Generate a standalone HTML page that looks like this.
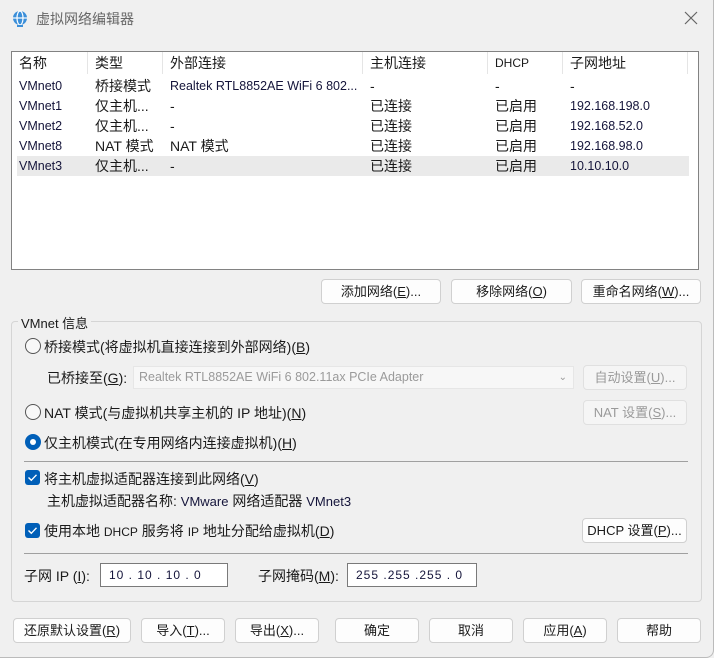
<!DOCTYPE html>
<html><head><meta charset="utf-8"><style>
*{box-sizing:border-box;margin:0;padding:0}
body{width:714px;height:658px;background:#f0f0f0;font-family:"Liberation Sans","Noto Sans CJK SC",sans-serif;font-size:13px;color:#1a1a1a;position:relative;overflow:hidden}
.a{position:absolute;white-space:nowrap}
.btn{position:absolute;height:25px;background:#fdfdfd;border:1px solid #d0d0d0;border-radius:4px;text-align:center;line-height:23px;font-size:13px}
.dis{color:#9a9a9a;background:#f5f5f5;border-color:#e0e0e0}
u{text-decoration:underline}
.lt{font-size:12.5px;color:#14143a}
.hd{position:absolute;top:0;height:22px;border-right:1px solid #e5e5e5;padding-left:7px;line-height:22px;font-size:14px}
.row{position:absolute;left:5px;width:672px;height:20px;line-height:20px;font-size:14px}
.row span{position:absolute;top:0}
.rad{position:absolute;width:16px;height:16px;border:1px solid #555;border-radius:50%;background:#f8f8f8}
.chk{position:absolute;width:15px;height:15px;background:#005fb8;border-radius:3px}
.in{position:absolute;height:24px;background:#fff;border:1px solid #7a7a7a;font-size:12px;line-height:22px;padding-left:8px;color:#14143a;letter-spacing:1px}
</style></head><body>
<div class="a" style="left:0;top:0;width:714px;height:658px;border-right:1px solid #bbb;border-bottom:1px solid #bbb;border-radius:0 0 8px 0"></div>
<svg class="a" style="left:11px;top:10px" width="18" height="18" viewBox="0 0 18 18"><circle cx="9" cy="8" r="7" fill="#3b8fd9"/><ellipse cx="9" cy="8" rx="3" ry="7" fill="none" stroke="#fff" stroke-width="1.2"/><line x1="2" y1="8" x2="16" y2="8" stroke="#fff" stroke-width="1.2"/><rect x="6" y="15" width="6" height="2" fill="#3b8fd9"/></svg>
<div class="a" style="left:36px;top:9px;font-size:14px;color:#666">虚拟网络编辑器</div>
<svg class="a" style="left:684px;top:11px" width="14" height="14"><path d="M1 1L13 13M13 1L1 13" stroke="#666" stroke-width="1.2"/></svg>

<div class="a" style="left:11px;top:51px;width:688px;height:219px;background:#fff;border:1px solid #828282">
<div class="hd" style="left:0;width:76px">名称</div>
<div class="hd" style="left:76px;width:75px">类型</div>
<div class="hd" style="left:151px;width:200px">外部连接</div>
<div class="hd" style="left:351px;width:125px">主机连接</div>
<div class="hd" style="left:476px;width:75px;font-size:12px">DHCP</div>
<div class="hd" style="left:551px;width:125px">子网地址</div>
<div class="row" style="top:24px"><span class="lt" style="left:2px">VMnet0</span><span style="left:78px">桥接模式</span><span class="lt" style="left:153px">Realtek RTL8852AE WiFi 6 802...</span><span style="left:353px">-</span><span style="left:478px">-</span><span style="left:553px">-</span></div>
<div class="row" style="top:44px"><span class="lt" style="left:2px">VMnet1</span><span style="left:78px">仅主机...</span><span style="left:153px">-</span><span style="left:353px">已连接</span><span style="left:478px">已启用</span><span class="lt" style="left:553px">192.168.198.0</span></div>
<div class="row" style="top:64px"><span class="lt" style="left:2px">VMnet2</span><span style="left:78px">仅主机...</span><span style="left:153px">-</span><span style="left:353px">已连接</span><span style="left:478px">已启用</span><span class="lt" style="left:553px">192.168.52.0</span></div>
<div class="row" style="top:84px"><span class="lt" style="left:2px">VMnet8</span><span style="left:78px">NAT 模式</span><span style="left:153px">NAT 模式</span><span style="left:353px">已连接</span><span style="left:478px">已启用</span><span class="lt" style="left:553px">192.168.98.0</span></div>
<div class="row" style="top:104px;background:#eaeaea"><span class="lt" style="left:2px">VMnet3</span><span style="left:78px">仅主机...</span><span style="left:153px">-</span><span style="left:353px">已连接</span><span style="left:478px">已启用</span><span class="lt" style="left:553px">10.10.10.0</span></div>
</div>

<div class="btn" style="left:321px;top:279px;width:120px">添加网络(<u>E</u>)...</div>
<div class="btn" style="left:451px;top:279px;width:121px">移除网络(<u>O</u>)</div>
<div class="btn" style="left:581px;top:279px;width:120px">重命名网络(<u>W</u>)...</div>

<div class="a" style="left:11px;top:321px;width:691px;height:281px;border:1px solid #d5d5d5;border-radius:4px"></div>
<div class="a" style="left:18px;top:313px;background:#f0f0f0;padding:0 3px;font-size:13px">VMnet 信息</div>

<div class="rad" style="left:25px;top:338px"></div>
<div class="a" style="left:44px;top:337px;font-size:14px">桥接模式(将虚拟机直接连接到外部网络)(<u>B</u>)</div>
<div class="a" style="left:47px;top:368px;font-size:14px">已桥接至(<u>G</u>):</div>
<div class="a" style="left:133px;top:366px;width:441px;height:23px;background:#f7f7f7;border:1px solid #e6e6e6;color:#9a9a9a;font-size:12.5px;line-height:21px;padding-left:5px">Realtek RTL8852AE WiFi 6 802.11ax PCIe Adapter<span style="position:absolute;right:6px;font-size:10px">&#8964;</span></div>
<div class="btn dis" style="left:583px;top:365px;width:104px">自动设置(<u>U</u>)...</div>

<div class="rad" style="left:25px;top:404px"></div>
<div class="a" style="left:44px;top:403px;font-size:14px">NAT 模式(与虚拟机共享主机的 IP 地址)(<u>N</u>)</div>
<div class="btn dis" style="left:583px;top:400px;width:104px">NAT 设置(<u>S</u>)...</div>

<div class="rad" style="left:25px;top:434px;background:#005fb8;border-color:#005fb8"><div style="position:absolute;left:4px;top:4px;width:6px;height:6px;border-radius:50%;background:#fff"></div></div>
<div class="a" style="left:44px;top:433px;font-size:14px">仅主机模式(在专用网络内连接虚拟机)(<u>H</u>)</div>

<div class="a" style="left:24px;top:461px;width:664px;height:1px;background:#a0a0a0"></div>

<div class="chk" style="left:25px;top:470px"><svg width="15" height="15"><path d="M3.5 7.5L6.3 10.3L11.5 4.8" stroke="#fff" stroke-width="1.4" fill="none"/></svg></div>
<div class="a" style="left:44px;top:469px;font-size:14px">将主机虚拟适配器连接到此网络(<u>V</u>)</div>
<div class="a" style="left:47px;top:491px;font-size:14px">主机虚拟适配器名称: <span style="font-size:13px;color:#14143a">VMware</span> 网络适配器 <span style="font-size:13px;color:#14143a">VMnet3</span></div>
<div class="chk" style="left:25px;top:523px"><svg width="15" height="15"><path d="M3.5 7.5L6.3 10.3L11.5 4.8" stroke="#fff" stroke-width="1.4" fill="none"/></svg></div>
<div class="a" style="left:44px;top:521px;font-size:14px">使用本地 <span style="font-size:12px">DHCP</span> 服务将 <span style="font-size:12px">IP</span> 地址分配给虚拟机(<u>D</u>)</div>
<div class="btn" style="left:582px;top:518px;width:105px">DHCP 设置(<u>P</u>)...</div>

<div class="a" style="left:24px;top:553px;width:664px;height:1px;background:#a0a0a0"></div>

<div class="a" style="left:24px;top:566px;font-size:14px">子网 IP (<u>I</u>):</div>
<div class="in" style="left:100px;top:563px;width:128px">10 . 10 . 10 . 0</div>
<div class="a" style="left:258px;top:566px;font-size:14px">子网掩码(<u>M</u>):</div>
<div class="in" style="left:347px;top:563px;width:130px">255 .255 .255 . 0</div>

<div class="btn" style="left:13px;top:618px;width:118px">还原默认设置(<u>R</u>)</div>
<div class="btn" style="left:141px;top:618px;width:84px">导入(<u>T</u>)...</div>
<div class="btn" style="left:235px;top:618px;width:84px">导出(<u>X</u>)...</div>
<div class="btn" style="left:335px;top:618px;width:84px">确定</div>
<div class="btn" style="left:429px;top:618px;width:84px">取消</div>
<div class="btn" style="left:523px;top:618px;width:84px">应用(<u>A</u>)</div>
<div class="btn" style="left:617px;top:618px;width:84px">帮助</div>
</body></html>
